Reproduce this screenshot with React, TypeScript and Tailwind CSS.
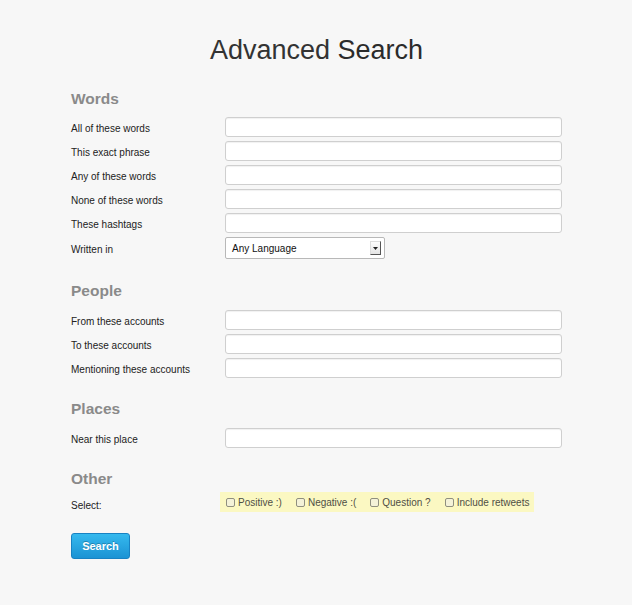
import React from "react";

const font = { fontFamily: '"Liberation Sans", Arial, Helvetica, sans-serif' };

function TextRow({ label }: { label: string }) {
  return (
    <div className="flex items-center h-[20px]">
      <div className="w-[154px] text-[10px] text-[#222] leading-[20px] pt-[3px] whitespace-nowrap">{label}</div>
      <div className="w-[337px] h-[20px] bg-white border border-[#cfcfcf] rounded-[3px] shadow-[inset_0_1px_1px_rgba(0,0,0,0.06)]" />
    </div>
  );
}

function Heading({ children, className = "" }: { children: React.ReactNode; className?: string }) {
  return (
    <div className={"h-[20px] leading-[20px] pt-[1px] text-[15.5px] font-bold text-[#8a8a8a] " + className}>{children}</div>
  );
}

function Check({ label, className = "" }: { label: string; className?: string }) {
  return (
    <div className={"flex items-center shrink-0 whitespace-nowrap " + className}>
      <div className="w-[9px] h-[9px] border border-[#8f8f7f] rounded-[2px] bg-[#f4f2d8] mr-[3px] shrink-0" />
      <span className="text-[10px] text-[#4f4f45]">{label}</span>
    </div>
  );
}

export default function App() {
  return (
    <div className="min-h-[605px] w-full bg-[#f7f7f7] pt-[34px]" style={font}>
      <h1 className="h-[32px] leading-[32px] text-[27px] text-center text-[#2b2b2b] pl-[1px]">
        <span className="text-[#333]">Advanced</span> <span className="text-[#2b2b2b]">Search</span>
      </h1>
      <div className="pl-[71px]">
        <Heading className="mt-[22px]">Words</Heading>
        <div className="mt-[9px] flex flex-col gap-[4px]">
          <TextRow label="All of these words" />
          <TextRow label="This exact phrase" />
          <TextRow label="Any of these words" />
          <TextRow label="None of these words" />
          <TextRow label="These hashtags" />
          <div className="flex items-center h-[22px]">
            <div className="w-[154px] text-[10px] text-[#222] pt-[2px]">Written in</div>
            <div className="w-[160px] h-[22px] bg-white border border-[#b8b8b8] rounded-[2px] flex items-center justify-between pl-[6px] pr-[3px]">
              <span className="text-[10px] text-[#111]">Any Language</span>
              <div className="w-[11px] h-[14px] bg-gradient-to-b from-[#fdfdfd] to-[#e4e4e4] border-r border-b border-[#555] border-t border-l border-t-[#ddd] border-l-[#ddd] flex items-center justify-center">
                <svg width="5" height="3" viewBox="0 0 5 3"><path d="M0 0h5L2.5 3z" fill="#222" /></svg>
              </div>
            </div>
          </div>
        </div>

        <Heading className="mt-[21px]">People</Heading>
        <div className="mt-[10px] flex flex-col gap-[4px]">
          <TextRow label="From these accounts" />
          <TextRow label="To these accounts" />
          <TextRow label="Mentioning these accounts" />
        </div>

        <Heading className="mt-[20px]">Places</Heading>
        <div className="mt-[10px] flex flex-col gap-[4px]">
          <TextRow label="Near this place" />
        </div>

        <Heading className="mt-[20px]">Other</Heading>
        <div className="mt-[4px] flex items-center h-[20px]">
          <div className="w-[149px] shrink-0 text-[10px] text-[#222] pt-[6px]">Select:</div>
          <div className="w-[314px] shrink-0 h-[20px] bg-[#fbf8c2] flex items-center pl-[6px]">
            <Check label="Positive :)" />
            <Check label="Negative :(" className="ml-[14px]" />
            <Check label="Question ?" className="ml-[14px]" />
            <Check label="Include retweets" className="ml-[14px]" />
          </div>
        </div>

        <button className="mt-[21px] w-[59px] h-[26px] rounded-[3px] border border-[#1882c3] bg-gradient-to-b from-[#35b9ee] to-[#1b93d4] text-white text-[11px] font-bold [text-shadow:0_-1px_0_rgba(0,0,0,0.25)]" style={font}>
          Search
        </button>
      </div>
    </div>
  );
}
